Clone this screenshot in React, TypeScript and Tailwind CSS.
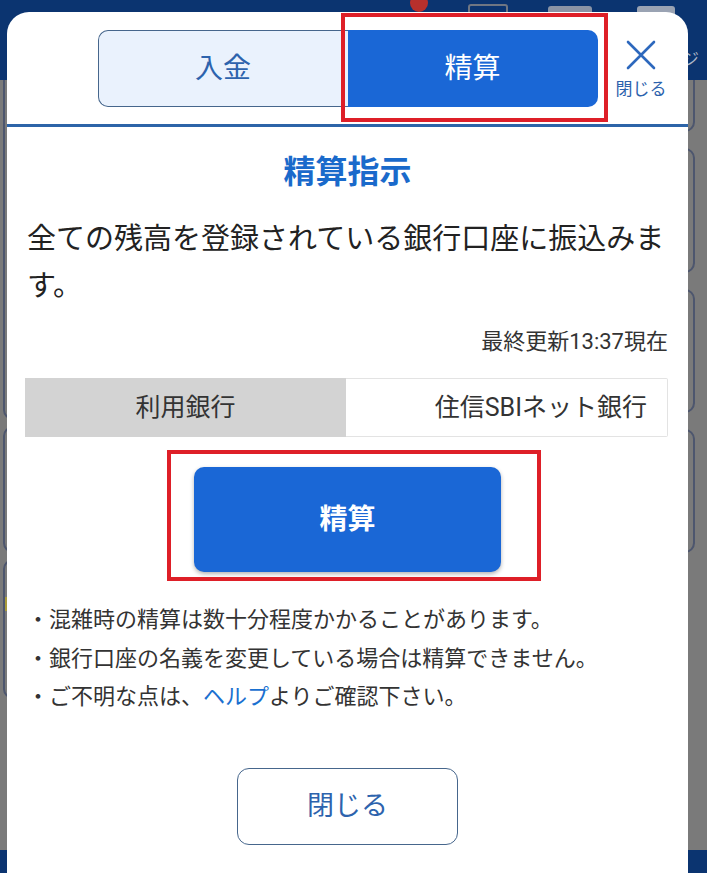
export default function App() {
  const font = "font-['Roboto','Noto_Sans_CJK_JP',sans-serif]";
  return (
    <div className={`relative w-[718px] h-[873px] overflow-hidden bg-white ${font}`}>
      {/* background page (dimmed) */}
      <div className="flex flex-col w-[707px] h-full">
        <header className="h-[80px] shrink-0 bg-[#0b3470] flex items-start justify-end pr-[2px]">
          <div className="flex items-start gap-[40px] pr-[6px]">
            <div className="w-[18px] h-[18px] rounded-full bg-[#b8302c] -mt-[6px]" />
            <div className="w-[40px] h-[22px] border-2 border-[#6f7683] rounded-[3px] mt-[4px]" />
            <div className="w-[44px] h-[22px] bg-[#8a93a5] rounded-[3px] mt-[6px]" />
            <div className="flex flex-col items-end">
              <div className="w-[38px] h-[22px] bg-[#9aa3b3] rounded-[3px] mt-[6px] mr-[24px]" />
              <span className="mt-[20px] text-[17px] leading-[22px] text-[#aeb7c8]">チャージ</span>
            </div>
          </div>
        </header>
        <main className="flex-1 bg-[#7a7a7a] flex">
          <div className="w-[340px] pl-[3px] flex flex-col gap-[6px]">
            <div className="h-[340px] border-2 border-t-0 border-[#4d566e] rounded-b-[10px]" />
            <div className="h-[127px] border-2 border-[#4d566e] rounded-[10px]" />
            <div className="h-[140px] border-2 border-[#4d566e] rounded-[10px] overflow-hidden flex">
              <div className="w-[6px] h-[14px] mt-[36px] bg-[#a89a3a]" />
            </div>
          </div>
          <div className="flex-1 pr-[12px] flex flex-col gap-[16px]">
            <div className="h-[52px] border-2 border-t-0 border-[#4d566e] rounded-b-[10px]" />
            <div className="h-[125px] border-2 border-[#4d566e] rounded-[10px]" />
            <div className="h-[124px] border-2 border-[#4d566e] rounded-[10px]" />
            <div className="h-[124px] border-2 border-[#4d566e] rounded-[10px]" />
          </div>
        </main>
        <footer className="h-[23px] shrink-0 bg-[#0b3470]" />
      </div>

      {/* modal */}
      <div className="absolute left-[7px] top-[12px] w-[681px] h-[900px] bg-white rounded-t-[22px] flex flex-col">
        {/* tabs header */}
        <div className="relative h-[112px] shrink-0 flex justify-center pt-[18px]">
          <div className="flex w-[500px] h-[77px]">
            <div className="w-[250px] flex items-center justify-center bg-[#eaf2fd] border border-r-0 border-[#46668c] rounded-l-[10px] text-[28px] text-[#2d63ad]">
              入金
            </div>
            <div className="relative w-[250px] flex items-center justify-center bg-[#1a67d6] rounded-r-[10px] text-[28px] text-white">
              精算
              <div className="absolute -left-[7px] -right-[10px] -top-[17px] -bottom-[15px] border-4 border-[#de1f28]" />
            </div>
          </div>
          <div className="absolute top-[28px] left-[606px] w-[56px] flex flex-col items-center gap-[9px]">
            <svg width="30" height="30" viewBox="0 0 30 30" fill="none">
              <path d="M2 2 L28 28 M28 2 L2 28" stroke="#2d68bd" strokeWidth="2.6" strokeLinecap="round" />
            </svg>
            <span className="text-[17px] leading-[20px] text-[#2d63ad] whitespace-nowrap">閉じる</span>
          </div>
        </div>
        <div className="h-[3px] shrink-0 bg-[#2d64a8]" />

        {/* body */}
        <div className="px-[20px] flex flex-col">
          <h2 className="mt-[25px] text-center text-[32px] leading-[40px] font-bold text-[#1a6acb]">精算指示</h2>
          <p className="mt-[24px] text-[29px] leading-[47px] text-[#222]">
            全ての残高を登録されている銀行口座に振込みます。
          </p>
          <p className="mt-[18px] text-right text-[22px] leading-[28px] text-[#333]">最終更新13:37現在</p>

          <div className="mt-[22px] -ml-[2px] flex h-[59px] text-[25px] text-[#333]">
            <div className="w-[321px] shrink-0 flex items-center justify-center bg-[#d3d3d3]">利用銀行</div>
            <div className="flex-1 flex items-center justify-end pr-[20px] border border-l-0 border-[#e3e3e3] rounded-r-[2px]">
              住信SBIネット銀行
            </div>
          </div>

          <div className="mt-[30px] flex justify-center">
            <div className="relative">
              <button className="w-[307px] h-[105px] rounded-[10px] bg-[#1a67d6] text-white text-[28px] font-bold shadow-[0_2px_4px_rgba(0,0,0,0.3)]">
                精算
              </button>
              <div className="absolute -left-[27px] -right-[40px] -top-[17px] -bottom-[9px] border-4 border-[#de1f28]" />
            </div>
          </div>

          <ul className="mt-[29px] text-[22px] leading-[38.5px] text-[#333]">
            <li>・混雑時の精算は数十分程度かかることがあります。</li>
            <li>・銀行口座の名義を変更している場合は精算できません。</li>
            <li>
              ・ご不明な点は、<span className="text-[#1a70d0]">ヘルプ</span>よりご確認下さい。
            </li>
          </ul>

          <div className="mt-[51px] flex justify-center">
            <button className="w-[221px] h-[77px] border border-[#46668c] rounded-[12px] text-[27px] text-[#2d63ad] bg-white">
              閉じる
            </button>
          </div>
        </div>
      </div>
    </div>
  );
}
